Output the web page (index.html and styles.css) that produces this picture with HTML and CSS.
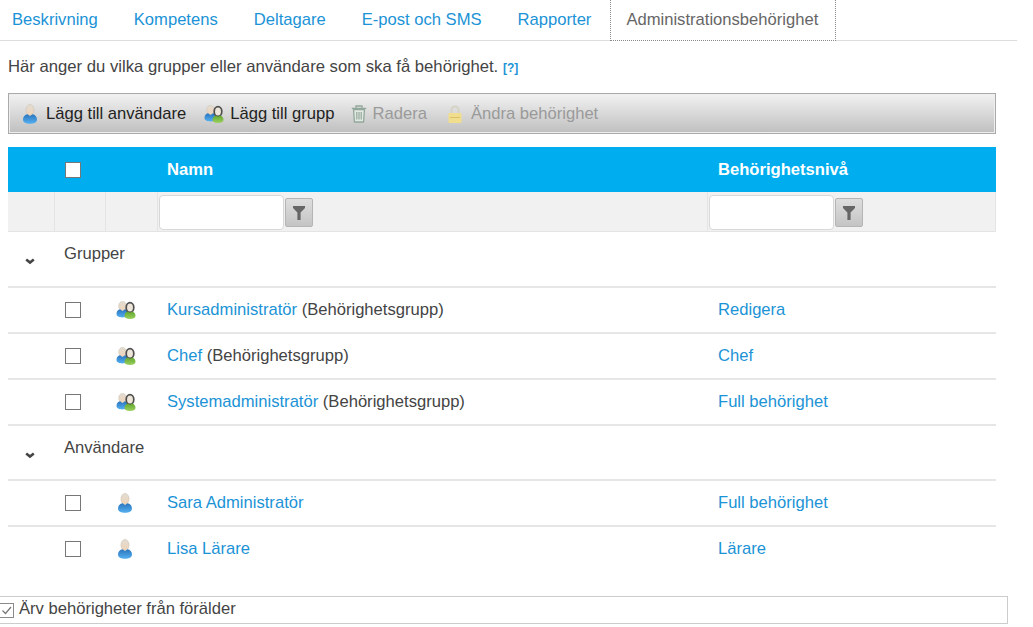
FILE: index.html
```html
<!DOCTYPE html>
<html lang="sv">
<head>
<meta charset="utf-8">
<title>Administrationsbehörighet</title>
<link rel="stylesheet" href="styles.css">
</head>
<body>
<svg class="defs" width="0" height="0" aria-hidden="true">
  <defs>
    <linearGradient id="blue" x1="0" y1="0" x2="0" y2="1"><stop offset="0" stop-color="#2a74bd"/><stop offset="1" stop-color="#55b0f0"/></linearGradient>
    <linearGradient id="green" x1="0" y1="0" x2="0" y2="1"><stop offset="0" stop-color="#62a52e"/><stop offset="1" stop-color="#9ad25e"/></linearGradient>
    <linearGradient id="skin" x1="0" y1="0" x2="0" y2="1"><stop offset="0" stop-color="#e2ddd3"/><stop offset="1" stop-color="#f0d3b8"/></linearGradient>
    <symbol id="user" viewBox="0 0 16 20">
      <ellipse cx="8" cy="6" rx="4" ry="5.500" fill="url(#skin)" stroke="#cfc6b6" stroke-width=".7"/>
      <path d="M1 15.500c0-3 2-4.800 4.500-5.300L8 12l2.500-1.800c2.500.5 4.500 2.300 4.500 5.300 0 3-3.200 4.300-7 4.300s-7-1.300-7-4.300z" fill="url(#blue)"/>
    </symbol>
    <symbol id="group" viewBox="0 0 20 18">
      <ellipse cx="6.500" cy="5" rx="3.800" ry="4.600" fill="url(#skin)" stroke="#cfc6b6" stroke-width=".6"/>
      <path d="M.5 13c0-2.800 1.500-4.300 3.500-4.700L6.500 10 9 8.300c2 .4 3 1.900 3 4.700 0 2.200-2.500 3.400-5.700 3.400S.5 15.200.5 13z" fill="url(#blue)"/>
      <ellipse cx="14" cy="6.500" rx="3.800" ry="4.800" fill="#efe6da" stroke="#4f4f4f" stroke-width="1.700"/>
      <path d="M8.500 15c0-2.700 1.500-4.200 3.500-4.600l2 1.400 2-1.400c2 .4 3.500 1.900 3.500 4.600 0 2-2.400 3-5.500 3s-5.500-1-5.500-3z" fill="url(#green)"/>
    </symbol>
    <symbol id="funnel" viewBox="0 0 12 14">
      <path d="M0 0h12v2L7.600 6.500V14H4.400V6.500L0 2z" fill="#666"/>
    </symbol>
    <symbol id="trash" viewBox="0 0 16 18">
      <path d="M.8 3.300h14.400M5 3V1h6v2" fill="none" stroke="#93a89c" stroke-width="1.300"/>
      <path d="M2.500 4.500h11l-1 12.500h-9z" fill="#e2e8e2" stroke="#93a89c" stroke-width="1.300"/>
      <path d="M5.800 7v7.500M8 7v7.500M10.200 7v7.500" stroke="#93a89c" stroke-width="1.200"/>
    </symbol>
    <symbol id="lock" viewBox="0 0 16 20">
      <path d="M4.500 10V6a3.500 3.500 0 0 1 7 0v4" fill="none" stroke="#d6d3c4" stroke-width="2"/>
      <rect x="1.500" y="9" width="13" height="10" rx="1" fill="#f0dd8e"/>
      <path d="M3 13.500h10" stroke="#d8c36a" stroke-width="1"/>
    </symbol>
  </defs>
</svg>

<nav class="tabs">
  <a class="tab" href="#">Beskrivning</a>
  <a class="tab" href="#">Kompetens</a>
  <a class="tab" href="#">Deltagare</a>
  <a class="tab" href="#">E-post och SMS</a>
  <a class="tab" href="#">Rapporter</a>
  <a class="tab tab-active" href="#">Administrationsbehörighet</a>
</nav>

<main class="content">
  <p class="intro">Här anger du vilka grupper eller användare som ska få behörighet. <a class="help" href="#">[?]</a></p>

  <div class="toolbar">
    <button class="tool"><svg class="ti ti-user"><use href="#user"/></svg>Lägg till användare</button>
    <button class="tool"><svg class="ti ti-group"><use href="#group"/></svg>Lägg till grupp</button>
    <button class="tool tool-off"><svg class="ti ti-trash"><use href="#trash"/></svg>Radera</button>
    <button class="tool tool-off"><svg class="ti ti-lock"><use href="#lock"/></svg>Ändra behörighet</button>
  </div>

  <div class="table">
    <div class="row head">
      <span></span>
      <span class="cell-check"><span class="check check-head"></span></span>
      <span></span>
      <span class="cell-name">Namn</span>
      <span class="cell-level">Behörighetsnivå</span>
    </div>
    <div class="row filters">
      <span class="fcell"></span>
      <span class="fcell"></span>
      <span class="fcell"></span>
      <span class="fcell ffield"><span class="finput"></span><span class="fbtn"><svg class="funnel"><use href="#funnel"/></svg></span></span>
      <span class="fcell ffield"><span class="finput"></span><span class="fbtn"><svg class="funnel"><use href="#funnel"/></svg></span></span>
    </div>

    <div class="row group group-first">
      <svg class="chev" viewBox="0 0 10 7"><path d="M1.200 1.500L5 4.500l3.800-3" fill="none" stroke="#444" stroke-width="2.600"/></svg>
      <span class="group-title">Grupper</span>
    </div>
    <div class="row item">
      <span></span>
      <span class="cell-check"><span class="check"></span></span>
      <svg class="ri ri-group"><use href="#group"/></svg>
      <span class="cell-name"><a href="#">Kursadministratör</a> (Behörighetsgrupp)</span>
      <span class="cell-level"><a href="#">Redigera</a></span>
    </div>
    <div class="row item">
      <span></span>
      <span class="cell-check"><span class="check"></span></span>
      <svg class="ri ri-group"><use href="#group"/></svg>
      <span class="cell-name"><a href="#">Chef</a> (Behörighetsgrupp)</span>
      <span class="cell-level"><a href="#">Chef</a></span>
    </div>
    <div class="row item">
      <span></span>
      <span class="cell-check"><span class="check"></span></span>
      <svg class="ri ri-group"><use href="#group"/></svg>
      <span class="cell-name"><a href="#">Systemadministratör</a> (Behörighetsgrupp)</span>
      <span class="cell-level"><a href="#">Full behörighet</a></span>
    </div>

    <div class="row group">
      <svg class="chev" viewBox="0 0 10 7"><path d="M1.200 1.500L5 4.500l3.800-3" fill="none" stroke="#444" stroke-width="2.600"/></svg>
      <span class="group-title">Användare</span>
    </div>
    <div class="row item">
      <span></span>
      <span class="cell-check"><span class="check"></span></span>
      <svg class="ri ri-user"><use href="#user"/></svg>
      <span class="cell-name"><a href="#">Sara Administratör</a></span>
      <span class="cell-level"><a href="#">Full behörighet</a></span>
    </div>
    <div class="row item item-last">
      <span></span>
      <span class="cell-check"><span class="check"></span></span>
      <svg class="ri ri-user"><use href="#user"/></svg>
      <span class="cell-name"><a href="#">Lisa Lärare</a></span>
      <span class="cell-level"><a href="#">Lärare</a></span>
    </div>
  </div>
</main>

<footer class="inherit">
  <svg class="inherit-check" viewBox="0 0 15 15"><rect x=".5" y=".5" width="14" height="14" fill="#fff" stroke="#8a8a8a"/><path d="M3.500 7.500l3 3 5.500-6.500" fill="none" stroke="#777" stroke-width="1.200"/></svg>
  <span>Ärv behörigheter från förälder</span>
</footer>
</body>
</html>
```
FILE: styles.css
```css
* { box-sizing: border-box; }
html, body { margin: 0; padding: 0; }
body {
  width: 1033px;
  height: 627px;
  overflow: hidden;
  background: #fff;
  font-family: "Liberation Sans", Arial, sans-serif;
  font-size: 16.6px;
  color: #444;
}
a { color: #1b93d6; text-decoration: none; }
.defs { position: absolute; }

.tabs {
  display: flex;
  height: 41px;
  width: 1017px;
  border-bottom: 1px solid #ddd;
}
.tab {
  display: block;
  padding-top: 10px;
  margin-right: 36px;
  white-space: nowrap;
}
.tab:first-child { margin-left: 12px; }
.tab-active {
  margin-left: -17px;
  margin-right: 0;
  width: 226px;
  height: 41px;
  padding-left: 15px;
  color: #666;
  border: 1px dotted #888;
  border-top: 0;
  background: #fff;
}

.content { padding-left: 8px; width: 996px; }
.intro { margin: 15px 0 0; height: 37px; font-size: 16.68px; line-height: 21px; color: #444; }
.help { font-size: 12px; font-weight: bold; }

.toolbar {
  display: flex;
  align-items: center;
  height: 41px;
  padding: 0 0 0 13px;
  border: 1px solid #aaa;
  box-shadow: inset 0 0 0 1px #eee;
  background: linear-gradient(#f2f2f2, #bfbfbf);
}
.tool {
  display: flex;
  align-items: center;
  gap: 6px;
  margin-right: 17px;
  padding: 0;
  border: 0;
  background: none;
  font: inherit;
  color: #222;
  white-space: nowrap;
}
.tool-off { color: #9a9a9a; gap: 5px; }
.ti { display: block; }
.ti-user { width: 16px; height: 20px; margin-right: 2px; }
.ti-group { width: 20px; height: 18px; margin-left: 1px; }
.ti-trash { width: 16px; height: 18px; }
.ti-lock { width: 16px; height: 20px; margin: 0 3px 0 3px; }

.table { margin-top: 13px; }
.row {
  display: grid;
  grid-template-columns: 47px 51px 52px 550px 1fr;
  align-items: center;
}
.head {
  height: 45px;
  background: #00aeef;
  color: #fff;
  font-weight: bold;
}
.cell-check { display: flex; padding-left: 10px; }
.check {
  display: block;
  width: 16px;
  height: 16px;
  background: #fff;
  border: 1px solid #777;
}
.filters {
  height: 40px;
  align-items: stretch;
  background: #f1f1f1;
  border-bottom: 1px solid #e4e4e4;
}
.fcell { border-right: 1px solid #e4e4e4; }
.ffield {
  display: flex;
  align-items: center;
  gap: 1px;
  padding: 1px 0 0 1px;
}
.finput {
  width: 125px;
  height: 35px;
  background: #fff;
  border: 1px solid #d8d8d8;
  border-radius: 4px;
}
.fbtn {
  display: flex;
  align-items: center;
  justify-content: center;
  width: 28px;
  height: 29px;
  margin-top: 1px;
  border: 1px solid #b5b5b5;
  border-radius: 2px;
  background: linear-gradient(#dedede, #c4c4c4);
}
.funnel { width: 12px; height: 14px; }

.group {
  height: 55px;
  border-bottom: 2px solid #e6e6e6;
  align-items: start;
  grid-template-columns: 47px 1fr;
}
.group-first { height: 56px; }
.chev { width: 10px; height: 7px; margin: 26px 0 0 17px; }
.group-title { padding: 12px 0 0 9px; }
.item {
  height: 46px;
  border-bottom: 2px solid #e6e6e6;
}
.item-last { border-bottom-color: transparent; }
.ri { display: block; }
.ri-user { width: 16px; height: 20px; margin-left: 11px; }
.ri-group { width: 20px; height: 18px; margin-left: 10px; }
.cell-name { padding-left: 9px; white-space: nowrap; }
.cell-level { padding-left: 10px; white-space: nowrap; }

.inherit {
  position: absolute;
  left: -1px;
  top: 596px;
  width: 1009px;
  height: 28px;
  display: flex;
  align-items: center;
  gap: 5px;
  padding-bottom: 2px;
  border: 1px solid #ccc;
  color: #444;
}
.inherit-check { width: 15px; height: 15px; flex: none; margin: 2px 0 0 -1px; }
```
